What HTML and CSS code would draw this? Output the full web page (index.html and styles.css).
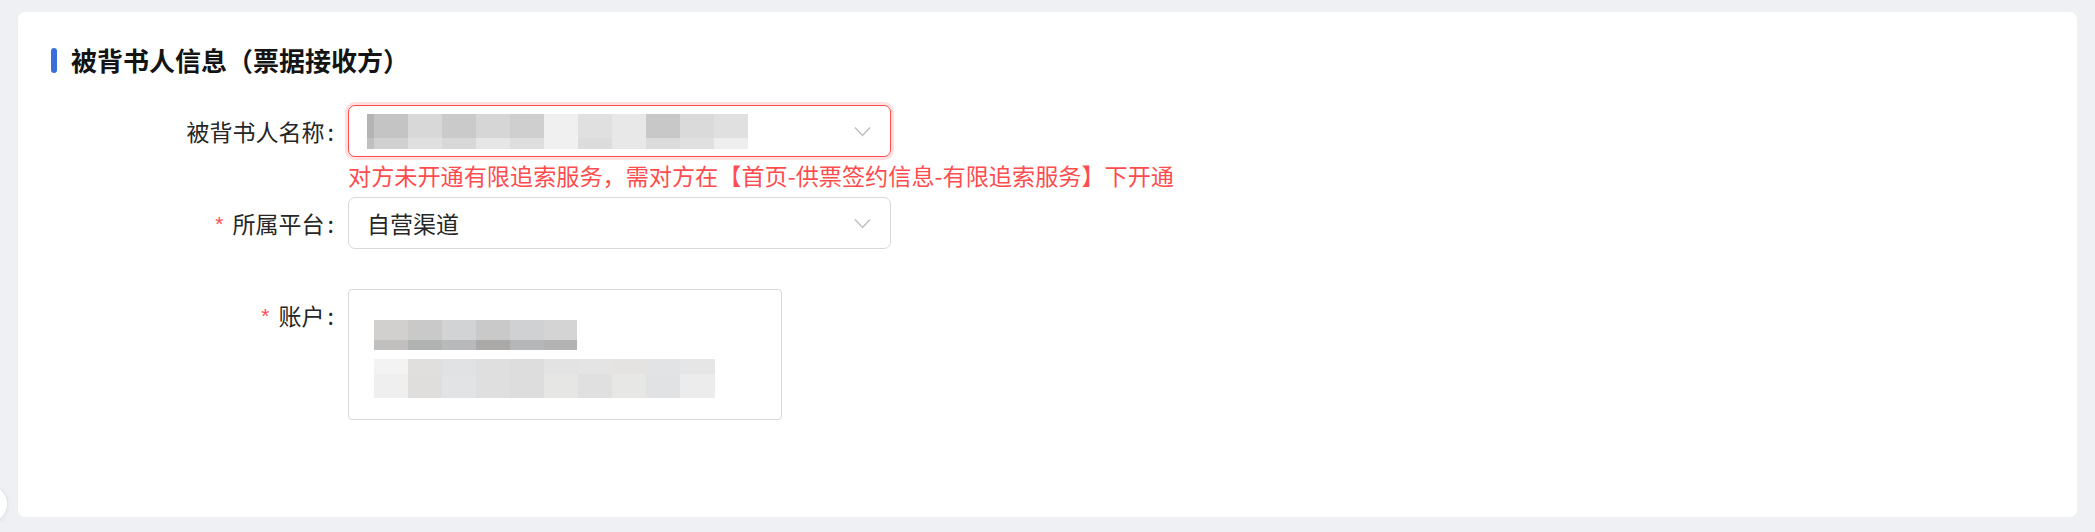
FILE: index.html
```html
<!DOCTYPE html>
<html lang="zh-CN">
<head>
<meta charset="utf-8">
<title>被背书人信息</title>
<link rel="stylesheet" href="styles.css">
</head>
<body>
<div class="card">
  <div class="section-title">
    <span class="title-bar"></span>
    <h2 class="title-text">被背书人信息（票据接收方）</h2>
  </div>

  <div class="form">
    <div class="form-item form-item-error">
      <div class="form-label"><span class="label-text">被背书人名称</span></div>
      <div class="form-control">
        <div class="select select-error">
          <div class="mosaic mosaic-name">
            <div class="mosaic-row name-row-1"></div>
            <div class="mosaic-row name-row-2"></div>
          </div>
          <svg class="chevron" width="17" height="11" viewBox="0 0 17 11"><polyline points="1,1.5 8.5,9.5 16,1.5" fill="none" stroke="#bfbfbf" stroke-width="1.5"/></svg>
        </div>
        <div class="explain">对方未开通有限追索服务，需对方在【首页-供票签约信息-有限追索服务】下开通</div>
      </div>
    </div>

    <div class="form-item">
      <div class="form-label"><span class="required">*</span><span class="label-text">所属平台</span></div>
      <div class="form-control">
        <div class="select">
          <span class="select-value">自营渠道</span>
          <svg class="chevron" width="17" height="11" viewBox="0 0 17 11"><polyline points="1,1.5 8.5,9.5 16,1.5" fill="none" stroke="#bfbfbf" stroke-width="1.5"/></svg>
        </div>
      </div>
    </div>

    <div class="form-item">
      <div class="form-label"><span class="required">*</span><span class="label-text">账户</span></div>
      <div class="form-control">
        <div class="account-box">
          <div class="mosaic mosaic-acc-1">
            <div class="mosaic-row acc1-row-1"></div>
            <div class="mosaic-row acc1-row-2"></div>
          </div>
          <div class="mosaic mosaic-acc-2">
            <div class="mosaic-row acc2-row-1"></div>
            <div class="mosaic-row acc2-row-2"></div>
          </div>
        </div>
      </div>
    </div>
  </div>
</div>
<div class="float-ball"></div>
</body>
</html>
```

FILE: styles.css
```css
* {
  box-sizing: border-box;
}

html, body {
  margin: 0;
  padding: 0;
}

body {
  background: #eff0f4;
  font-family: "Noto Sans CJK SC", "Noto Sans", sans-serif;
  color: #262626;
  padding: 12px 18px 15px 18px;
  overflow: hidden;
  position: relative;
  height: 532px;
}

.card {
  background: #ffffff;
  border-radius: 7px;
  height: 505px;
  padding: 28px 33px 0 33px;
}

.section-title {
  display: flex;
  align-items: center;
  height: 40px;
  gap: 14px;
  margin-bottom: 25px;
}

.title-bar {
  width: 6px;
  height: 25px;
  border-radius: 3px;
  background: #3a6fdb;
}

.title-text {
  margin: 0;
  font-size: 26px;
  font-weight: 700;
  line-height: 40px;
  color: #141414;
}

.form {
  display: flex;
  flex-direction: column;
}

.form-item {
  display: flex;
  align-items: flex-start;
  margin-bottom: 40px;
}

.form-item-error {
  margin-bottom: 0;
}

.form-label {
  flex: none;
  width: 297px;
  height: 52px;
  display: flex;
  align-items: center;
  justify-content: flex-end;
  font-size: 23px;
  line-height: 52px;
  color: #262626;
  white-space: nowrap;
}

.label-text::after {
  content: ":";
  margin: 0 14px 0 3px;
}

.required {
  color: #ff4d4f;
  font-family: "Liberation Mono", monospace;
  font-size: 21px;
  margin-right: 7px;
  transform: translateY(3px);
  display: inline-block;
  line-height: 1;
}

.form-control {
  display: flex;
  flex-direction: column;
}

.select {
  width: 543px;
  height: 52px;
  border: 1px solid #d9d9d9;
  border-radius: 7px;
  background: #fff;
  display: flex;
  align-items: center;
  justify-content: space-between;
  padding: 0 19px 0 18px;
}

.select-error {
  border-color: #ff4d4f;
  box-shadow: 0 0 0 3px rgba(255, 77, 79, 0.18);
}

.select-value {
  font-size: 23px;
  color: #262626;
  line-height: 1;
}

.chevron {
  flex: none;
}

.explain {
  font-size: 23.15px;
  line-height: 36px;
  height: 40px;
  color: #ff4d4f;
  white-space: nowrap;
}

.mosaic {
  display: flex;
  flex-direction: column;
}

.mosaic-name {
  width: 381px;
}

.name-row-1 {
  height: 24px;
  background: linear-gradient(to right,
    #b4b4b4 0 7px,
    #c4c4c4 7px 41px,
    #d8d8d8 41px 75px,
    #cacaca 75px 109px,
    #d6d6d6 109px 143px,
    #cfcfcf 143px 177px,
    #f0f0f0 177px 211px,
    #e0e0e0 211px 245px,
    #e8e8e8 245px 279px,
    #c8c8c8 279px 313px,
    #dadada 313px 347px,
    #e0e0e0 347px 381px);
}

.name-row-2 {
  height: 11px;
  background: linear-gradient(to right,
    #c0c0c0 0 7px,
    #d0d0d0 7px 41px,
    #e0e0e0 41px 75px,
    #d8d8d8 75px 109px,
    #e6e6e6 109px 143px,
    #dedede 143px 177px,
    #f0f0f0 177px 211px,
    #dcdcdc 211px 245px,
    #e8e8e8 245px 279px,
    #dcdcdc 279px 313px,
    #e0e0e0 313px 347px,
    #eeeeee 347px 381px);
}

.account-box {
  width: 434px;
  height: 131px;
  border: 1px solid #d9d9d9;
  border-radius: 4px;
  padding: 30px 25px 0 25px;
  display: flex;
  flex-direction: column;
  gap: 9px;
}

.mosaic-acc-1 {
  width: 203px;
}

.acc1-row-1 {
  height: 20px;
  background: linear-gradient(to right,
    #d1d0cf 0 34px,
    #c9c9c9 34px 68px,
    #d2d3d4 68px 102px,
    #c9c9c9 102px 136px,
    #d0d1d3 136px 170px,
    #d4d4d4 170px 203px);
}

.acc1-row-2 {
  height: 10px;
  background: linear-gradient(to right,
    #c1c0bf 0 34px,
    #b1b2b2 34px 68px,
    #b8b9ba 68px 102px,
    #aba9a8 102px 136px,
    #b5b6b7 136px 170px,
    #b3b3b3 170px 203px);
}

.mosaic-acc-2 {
  width: 341px;
}

.acc2-row-1 {
  height: 15px;
  background: linear-gradient(to right,
    #f3f3f3 0 34px,
    #e0dfde 34px 68px,
    #e1e2e4 68px 102px,
    #dfdfdf 102px 136px,
    #dcdddc 136px 170px,
    #e3e3e3 170px 204px,
    #e4e4e4 204px 238px,
    #e4e3e1 238px 272px,
    #e2e3e5 272px 306px,
    #e6e6e6 306px 341px);
}

.acc2-row-2 {
  height: 24px;
  background: linear-gradient(to right,
    #efefef 0 34px,
    #dfdedd 34px 68px,
    #e2e3e5 68px 102px,
    #dfdfdf 102px 136px,
    #dddddd 136px 170px,
    #e6e6e5 170px 204px,
    #e0e0e0 204px 238px,
    #e7e7e5 238px 272px,
    #e1e2e4 272px 306px,
    #ececec 306px 341px);
}

.float-ball {
  position: absolute;
  left: -30px;
  top: 485px;
  width: 38px;
  height: 38px;
  border-radius: 50%;
  background: #ffffff;
  border: 1px solid #e4e5ea;
  box-shadow: 0 1px 4px rgba(0, 0, 0, 0.06);
}
```
